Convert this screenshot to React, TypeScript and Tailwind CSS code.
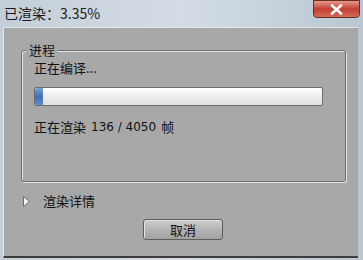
import React from 'react'

const cjk = { fontFamily: '"Noto Sans CJK SC", "Noto Sans", sans-serif' }

export default function App() {
  return (
    <div
      className="w-[363px] h-[260px] flex flex-col overflow-hidden bg-gradient-to-r from-[#c4ced8] via-[#d4dde5] to-[#b9c6d2] text-[#111]"
      style={cjk}
    >
      {/* title bar */}
      <div className="h-[27px] flex items-start justify-between shrink-0">
        <div className="pl-[4px] pt-[3px] text-[14px] leading-[20px] text-[#1a1a1a]">已渲染：3.35%</div>
        <div className="mr-[3px] w-[47px] h-[18px] rounded-b-[4px] border border-[#6b2a22] bg-gradient-to-b from-[#e39a8e] via-[#c23e32] to-[#d26a5c] flex items-center justify-center">
          <svg width="13" height="11" viewBox="0 0 13 11">
            <path d="M2 1.5 L11 9.5 M11 1.5 L2 9.5" stroke="#fff" strokeWidth="2.6" strokeLinecap="round" />
          </svg>
        </div>
      </div>

      {/* body */}
      <div className="flex-1 mx-[3px] mr-[5px] mb-[2px] bg-[#a8a8a8] border-t border-l border-[#e6e6e6] border-b-2 border-b-[#3c3c3c] flex flex-col">
        {/* group box */}
        <div className="relative mt-[22px] ml-[17px] mr-[12px] h-[132px] rounded-[3px] border border-[#6e6e6e] shadow-[1px_1px_0_#e4e4e4,inset_1px_1px_0_#e4e4e4]">
          <div className="absolute -top-[10px] left-[4px] px-[3px] bg-[#a8a8a8] text-[13px] leading-[18px]">进程</div>
          <div className="flex flex-col pl-[12px] pt-[8px]">
            <div className="text-[13px] leading-[18px]">正在编译...</div>
            <div className="mt-[10px] w-[289px] h-[19px] rounded-[2px] border border-[#6c6c6c] bg-gradient-to-b from-[#ffffff] via-[#ececec] to-[#e0e0e0] flex">
              <div className="w-[8px] h-full rounded-l-[2px] bg-gradient-to-b from-[#7aa2d6] via-[#3f72b8] to-[#5f8cc9]" />
            </div>
            <div className="mt-[12px] flex items-center text-[13px] leading-[18px]">
              <span>正在渲染</span>
              <span className="ml-[5px] text-[12px]" style={{ fontFamily: '"DejaVu Sans", sans-serif' }}>136 / 4050</span>
              <span className="ml-[5px]">帧</span>
            </div>
          </div>
        </div>

        {/* details toggle */}
        <div className="flex items-center mt-[10px] ml-[19px]">
          <svg width="8" height="11" viewBox="0 0 8 11">
            <path d="M0.5 0.5 L6.5 5.5 L0.5 10.5 Z" fill="#f4f4f4" stroke="#6a6a6a" strokeWidth="1" />
          </svg>
          <span className="ml-[12px] text-[13px] leading-[18px]">渲染详情</span>
        </div>

        {/* cancel */}
        <div className="flex justify-center mt-[9px] pl-[4px]">
          <button className="w-[80px] h-[21px] rounded-[3px] border border-[#5e5e5e] bg-gradient-to-b from-[#cfcfcf] via-[#b4b4b4] to-[#a2a2a2] shadow-[inset_1px_1px_0_#e2e2e2] text-[13px] leading-[18px]">
            取消
          </button>
        </div>
      </div>
    </div>
  )
}
